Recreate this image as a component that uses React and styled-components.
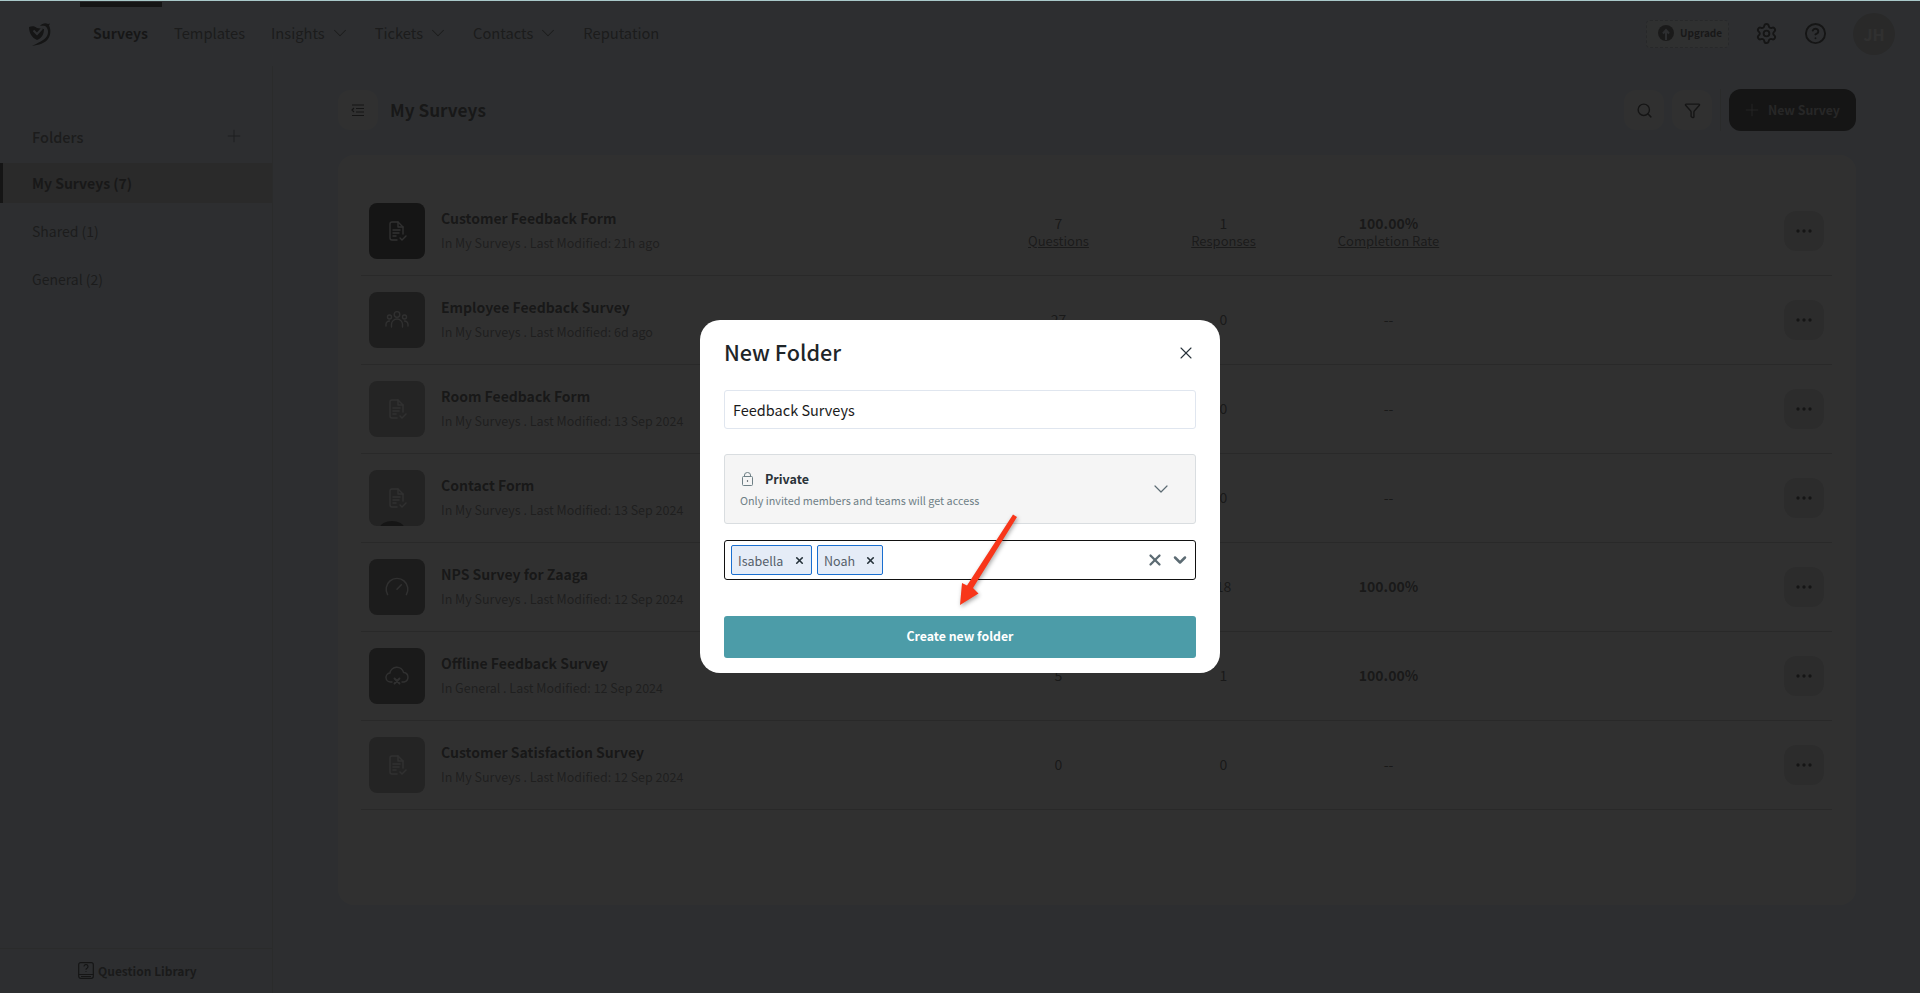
import React from "react";
import styled, { createGlobalStyle } from "styled-components";
import { ChevronDown, CircleHelp, Funnel, Gauge, Plus, Search, Settings, X } from "lucide-react";

const GlobalStyle = createGlobalStyle`
	* {
		box-sizing: border-box;
	}
	html, body {
		margin: 0;
		height: 100%;
		overflow: hidden;
	}
	body {
		font-family: "Noto Sans CJK SC", "Noto Sans", sans-serif;
		color: #232323;
	}
`;

const Page = styled.div`
	position: relative;
	width: 1920px;
	height: 993px;
	background: #dcecff;
	border-top: 1px solid #a9c9c9;
	display: flex;
	flex-direction: column;
	overflow: hidden;
`;

/* header */
const Header = styled.header`
	height: 65px;
	flex: none;
	display: flex;
	align-items: center;
	padding: 0 25px 0 29px;
`;

const Logo = styled.svg`
	width: 22px;
	height: 25px;
	margin-top: 1px;
	color: #000;
`;

const Nav = styled.nav`
	display: flex;
	align-items: center;
	margin-left: 42px;
	gap: 26px;
	flex: 1;
`;

const NavItem = styled.a`
	position: relative;
	display: flex;
	align-items: center;
	gap: 4px;
	padding-bottom: 2px;
	font-size: ${({ $active }) => ($active ? 14 : 14.7)}px;
	line-height: 62px;
	font-weight: ${({ $active }) => ($active ? 600 : 400)};
	color: ${({ $active }) => ($active ? "#111" : "#404040")};

	svg {
		margin-right: -2px;
	}

	${({ $active }) => $active && `
		&::before {
			content: "";
			position: absolute;
			top: 0;
			left: -13px;
			right: -14px;
			height: 5px;
			background: #000;
		}
	`}
`;

const UpgradeButton = styled.button`
	display: flex;
	align-items: center;
	gap: 6px;
	width: 83px;
	height: 28px;
	padding: 0 0 1px 11px;
	margin-right: 26px;
	background: #f4f8ff;
	border: 1px dashed #a8b2bc;
	border-radius: 4px;
	font: 700 10px/1 "Noto Sans CJK SC", "Noto Sans", sans-serif;
	color: #222;
`;

const HeaderIcon = styled.span`
	display: flex;
	color: #000;
	margin-right: ${({ $gap }) => $gap}px;
`;

const Avatar = styled.div`
	width: 42px;
	height: 42px;
	border-radius: 50%;
	background: #b8b8b8;
	color: #fff;
	display: flex;
	align-items: center;
	justify-content: center;
	font-size: 16px;
	font-weight: 600;
`;

/* sidebar */
const Body = styled.div`
	flex: 1;
	display: flex;
	min-height: 0;
`;

const Sidebar = styled.aside`
	width: 273px;
	flex: none;
	display: flex;
	flex-direction: column;
	border-right: 1px solid #c4cbd2;
	padding-top: 57px;
`;

const FolderHead = styled.div`
	display: flex;
	align-items: center;
	justify-content: space-between;
	padding: 0 28px 0 32px;
	height: 26px;
	font-size: 14.5px;
	color: #404040;
	font-weight: 500;
	margin-bottom: 14px;
`;

const FolderItem = styled.div`
	display: flex;
	align-items: center;
	height: 40px;
	margin-bottom: 8px;
	padding-left: ${({ $active }) => ($active ? 29 : 32)}px;
	font-size: 14px;
	font-weight: ${({ $active }) => ($active ? 600 : 400)};
	color: ${({ $active }) => ($active ? "#222" : "#484848")};
	background: ${({ $active }) => ($active ? "#c0c0c0" : "transparent")};
	border-left: ${({ $active }) => ($active ? "3px solid #000" : "0")};
`;

const SidebarFoot = styled.div`
	margin-top: auto;
	height: 45px;
	border-top: 1px solid #c4cbd2;
	display: flex;
	align-items: center;
	gap: 4px;
	padding: 0 0 2px 78px;
	font-size: 12px;
	font-weight: 700;
	color: #333;
`;

/* main */
const Main = styled.main`
	flex: 1;
	display: flex;
	flex-direction: column;
	padding: 23px 64px 0 65px;
	min-width: 0;
`;

const Toolbar = styled.div`
	display: flex;
	align-items: center;
	height: 42px;
	margin-bottom: 24px;
`;

const SquareButton = styled.button`
	width: 40px;
	height: 40px;
	flex: none;
	display: flex;
	align-items: center;
	justify-content: center;
	padding: 0;
	border: 0;
	border-radius: 12px;
	background: ${({ $tone }) => $tone || "#fafafa"};
	color: #000;
`;

const PageTitle = styled.h1`
	flex: 1;
	margin: 0 0 0 12px;
	font-size: 17.2px;
	line-height: 26px;
	font-weight: 600;
	color: #1c1c1c;
`;

const ToolGroup = styled.div`
	display: flex;
	gap: 8px;
`;

const ToolDivider = styled.span`
	width: 1px;
	height: 42px;
	margin: 0 8px;
	background: #c4cbd2;
`;

const NewSurveyButton = styled.button`
	width: 127px;
	height: 42px;
	display: flex;
	align-items: center;
	gap: 6px;
	padding: 0 0 0 13px;
	border: 0;
	border-radius: 12px;
	background: #000;
	color: #a6a6a6;
	font: 600 12.3px/1 "Noto Sans CJK SC", "Noto Sans", sans-serif;
`;

const Panel = styled.section`
	height: 750px;
	flex: none;
	background: #fff;
	border-radius: 16px;
	padding: 32px 24px 0 23px;
`;

const Row = styled.div`
	display: flex;
	align-items: center;
	height: 89px;
	padding: 0 8px;
	border-bottom: 1px solid #b8b8b8;
`;

const Tile = styled.div`
	position: relative;
	width: 56px;
	height: 56px;
	flex: none;
	border-radius: 8px;
	overflow: hidden;
	display: flex;
	align-items: center;
	justify-content: center;
	background: ${({ $tone }) => $tone};
	color: #fff;
`;

const TileBump = styled.span`
	position: absolute;
	left: 11px;
	bottom: -8px;
	width: 24px;
	height: 13px;
	border-radius: 50%;
	background: #000;
`;

const RowText = styled.div`
	width: 535px;
	margin: -2px 0 0 16px;
	flex: none;
`;

const RowTitle = styled.div`
	font-size: 14px;
	line-height: 20px;
	font-weight: 600;
	color: #1c1c1c;
`;

const RowMeta = styled.div`
	margin-top: 6px;
	font-size: 12.5px;
	line-height: 18px;
	color: #606060;
`;

const Stat = styled.div`
	width: 165px;
	flex: none;
	padding: ${({ $labelled }) => ($labelled ? "1px 0 0" : "0 0 2px")};
	text-align: center;
	font-size: 14px;
	line-height: 18px;
	font-weight: ${({ $bold }) => ($bold ? 700 : 400)};
	color: #2a2a2a;
`;

const StatLabel = styled.div`
	font-size: 13px;
	font-weight: 400;
	text-decoration: underline;
	color: #3a3a3a;
`;

const RowAction = styled.div`
	margin-left: auto;
`;

const MoreDots = styled.svg`
	width: 16px;
	height: 4px;
`;

/* modal */
const Overlay = styled.div`
	position: absolute;
	inset: 0;
	background: rgba(24, 24, 24, 0.895);
`;

const Modal = styled.div`
	position: absolute;
	left: 700px;
	top: 319px;
	width: 520px;
	height: 353px;
	background: #fff;
	border-radius: 20px;
	padding: 17px 24px 0;
`;

const ModalHead = styled.div`
	display: flex;
	align-items: center;
	justify-content: space-between;
	height: 32px;
	color: #27323a;
	margin-bottom: 21px;
`;

const ModalTitle = styled.h2`
	margin: 0;
	padding-bottom: 3px;
	font-size: 21.6px;
	line-height: 29px;
	font-weight: 500;
	color: #1e2528;
`;

const NameField = styled.div`
	height: 39px;
	border: 1px solid #e0e6ef;
	border-radius: 3px;
	display: flex;
	align-items: center;
	padding-left: 8px;
	font-size: 14.5px;
	color: #1b1b1b;
	margin-bottom: 25px;
`;

const PrivacyBox = styled.div`
	height: 70px;
	border: 1px solid #d9dde0;
	border-radius: 3px;
	background: #f5f5f5;
	display: flex;
	align-items: center;
	justify-content: space-between;
	padding: 0 22px 0 15px;
	margin-bottom: 16px;
`;

const PrivacyTitle = styled.div`
	display: flex;
	align-items: center;
	gap: 12px;
	padding-left: 2px;
	font-size: 12.5px;
	line-height: 20px;
	font-weight: 600;
	color: #2a3338;
`;

const PrivacyHint = styled.div`
	margin-top: 2px;
	font-size: 10.8px;
	line-height: 18px;
	color: #6f8086;
`;

const MultiSelect = styled.div`
	height: 40px;
	border: 1px solid #111;
	border-radius: 3px;
	display: flex;
	align-items: center;
	gap: 5px;
	padding: 0 5px 0 6px;
	margin-bottom: 36px;
`;

const Chip = styled.span`
	width: ${({ $width }) => $width}px;
	height: 30px;
	display: flex;
	align-items: center;
	justify-content: space-between;
	padding: 0 6px;
	background: #e5ecf7;
	border: 1px solid #1a6fd0;
	border-radius: 2px;
	font-size: 12.5px;
	color: #55606a;
`;

const ChipRemove = styled.span`
	display: flex;
	color: #26323a;
`;

const SelectControls = styled.div`
	margin-left: auto;
	display: flex;
	align-items: center;
	gap: 6px;
	color: #5c6b73;
`;

const SubmitButton = styled.button`
	display: block;
	width: 100%;
	height: 42px;
	padding: 0 0 2px;
	border: 0;
	border-radius: 3px;
	background: #4c9ca8;
	color: #fff;
	font: 600 12.3px/1 "Noto Sans CJK SC", "Noto Sans", sans-serif;
`;

const Annotation = styled.svg`
	position: absolute;
	left: 950px;
	top: 504px;
	width: 80px;
	height: 110px;
	filter: drop-shadow(1px 2px 2px rgba(0, 0, 0, 0.35));
`;

const navItems = [
	{ label: "Surveys", active: true },
	{ label: "Templates" },
	{ label: "Insights", menu: true },
	{ label: "Tickets", menu: true },
	{ label: "Contacts", menu: true },
	{ label: "Reputation" },
];

const folders = [
	{ label: "My Surveys (7)", active: true },
	{ label: "Shared (1)" },
	{ label: "General (2)" },
];

const FormIcon = () => (
	<svg width="24" height="24" viewBox="0 0 24 24" fill="none" stroke="currentColor" strokeWidth="1.4" strokeLinecap="round" strokeLinejoin="round">
		<path d="M12 21H7a2 2 0 0 1-2-2V5a2 2 0 0 1 2-2h6l5 5v7" />
		<path d="M13 3v5h5M8 11h7M8 14h6M8 17h3M15 19l2 2 4-4" />
	</svg>
);

const TeamIcon = () => (
	<svg width="26" height="26" viewBox="0 0 26 26" fill="none" stroke="currentColor" strokeWidth="1.3" strokeLinecap="round">
		<circle cx="13" cy="7.5" r="2.8" />
		<circle cx="5.5" cy="10" r="2" />
		<circle cx="20.5" cy="10" r="2" />
		<path d="M7.5 20v-2.5a5.5 5.5 0 0 1 11 0V20M2 19v-1.5A3.5 3.5 0 0 1 5.500 14M24 19v-1.500A3.500 3.500 0 0 0 20.500 14" />
	</svg>
);

const OfflineIcon = () => (
	<svg width="26" height="26" viewBox="0 0 26 26" fill="none" stroke="currentColor" strokeWidth="1.4" strokeLinecap="round" strokeLinejoin="round">
		<path d="M8 19H6.500a4.500 4.500 0 0 1-.6-8.960A7 7 0 0 1 19.600 9.500 4.800 4.800 0 0 1 20 19h-2" />
		<path d="M10.500 15.500l5 5M15.500 15.500l-5 5" strokeWidth="1.800" />
	</svg>
);

const surveys = [
	{ title: "Customer Feedback Form", meta: "In My Surveys . Last Modified: 21h ago", tone: "#000000", icon: <FormIcon />, questions: "7", responses: "1", rate: "100.00%", labels: true },
	{ title: "Employee Feedback Survey", meta: "In My Surveys . Last Modified: 6d ago", tone: "#5a5a5a", icon: <TeamIcon />, questions: "27", responses: "0", rate: "--" },
	{ title: "Room Feedback Form", meta: "In My Surveys . Last Modified: 13 Sep 2024", tone: "#909090", icon: <FormIcon />, questions: "4", responses: "0", rate: "--" },
	{ title: "Contact Form", meta: "In My Surveys . Last Modified: 13 Sep 2024", tone: "#808080", icon: <FormIcon />, questions: "3", responses: "0", rate: "--", bump: true },
	{ title: "NPS Survey for Zaaga", meta: "In My Surveys . Last Modified: 12 Sep 2024", tone: "#484848", icon: <Gauge size={26} strokeWidth={1.3} />, questions: "2", responses: "18", rate: "100.00%" },
	{ title: "Offline Feedback Survey", meta: "In General . Last Modified: 12 Sep 2024", tone: "#303030", icon: <OfflineIcon />, questions: "5", responses: "1", rate: "100.00%" },
	{ title: "Customer Satisfaction Survey", meta: "In My Surveys . Last Modified: 12 Sep 2024", tone: "#909090", icon: <FormIcon />, questions: "0", responses: "0", rate: "--" },
];

function SurveyRow({ survey }) {
	return (
		<Row>
			<Tile $tone={survey.tone}>
				{survey.icon}
				{survey.bump && <TileBump />}
			</Tile>
			<RowText>
				<RowTitle>{survey.title}</RowTitle>
				<RowMeta>{survey.meta}</RowMeta>
			</RowText>
			<Stat $labelled={survey.labels}>
				{survey.questions}
				{survey.labels && <StatLabel>Questions</StatLabel>}
			</Stat>
			<Stat $labelled={survey.labels}>
				{survey.responses}
				{survey.labels && <StatLabel>Responses</StatLabel>}
			</Stat>
			<Stat $labelled={survey.labels} $bold={survey.rate !== "--"}>
				{survey.rate}
				{survey.labels && <StatLabel>Completion Rate</StatLabel>}
			</Stat>
			<RowAction>
				<SquareButton $tone="#d8d8d8">
					<MoreDots viewBox="0 0 16 4" fill="currentColor">
						<circle cx="2" cy="2" r="1.700" />
						<circle cx="8" cy="2" r="1.700" />
						<circle cx="14" cy="2" r="1.700" />
					</MoreDots>
				</SquareButton>
			</RowAction>
		</Row>
	);
}

export default function App() {
	return (
		<Page>
			<GlobalStyle />
			<Header>
				<Logo viewBox="0 0 22 25" fill="currentColor">
					<path d="M0 5C3 3.500 6 4 8 6l7 1c0 5-2 9-7 11C3 16 0 11 0 5z" />
					<path d="M11 4c2-3 6-3.500 8-2l2-.5-1 2C22 7 22 13 19 17c-3 4-9 6-16 7 5-3 12-5 15-10 2-4 1-8-2-10-1.500-.5-3-.5-5 0z" />
					<path d="M4.500 8.500l3.500 3.500 5-5.500" fill="none" stroke="#dcecff" strokeWidth="2" />
				</Logo>
				<Nav>
					{navItems.map((item) => (
						<NavItem key={item.label} $active={item.active}>
							{item.label}
							{item.menu && <ChevronDown size={22} strokeWidth={1.1} />}
						</NavItem>
					))}
				</Nav>
				<UpgradeButton>
					<svg width="16" height="16" viewBox="0 0 16 16">
						<circle cx="8" cy="8" r="8" fill="#333" />
						<path d="M8 15V6M5 8.500L8 5l3 3.500" fill="none" stroke="#dcecff" strokeWidth="2" />
					</svg>
					Upgrade
				</UpgradeButton>
				<HeaderIcon $gap={26}><Settings size={23} strokeWidth={2} /></HeaderIcon>
				<HeaderIcon $gap={26}><CircleHelp size={23} strokeWidth={2} /></HeaderIcon>
				<Avatar>JH</Avatar>
			</Header>
			<Body>
				<Sidebar>
					<FolderHead>
						Folders
						<Plus size={20} strokeWidth={1} />
					</FolderHead>
					{folders.map((folder) => (
						<FolderItem key={folder.label} $active={folder.active}>{folder.label}</FolderItem>
					))}
					<SidebarFoot>
						<svg width="16" height="17" viewBox="0 0 16 17" fill="none" stroke="#000" strokeWidth="1.200">
							<rect x="0.700" y="0.700" width="14.600" height="15.600" rx="2" />
							<path d="M.7 12.500h14.600M3 14.500h10" />
							<path d="M6 4.500a2 2 0 1 1 3 1.800c-.8.400-1 .8-1 1.500M8 9v.8" />
						</svg>
						Question Library
					</SidebarFoot>
				</Sidebar>
				<Main>
					<Toolbar>
						<SquareButton>
							<svg width="14" height="14" viewBox="0 0 14 14" fill="none" stroke="#000" strokeWidth="1.200">
								<path d="M1 2h12M5 5.500h8M5 9h8M1 12.500h12M3 5l-2 2 2 2" />
							</svg>
						</SquareButton>
						<PageTitle>My Surveys</PageTitle>
						<ToolGroup>
							<SquareButton><Search size={17} strokeWidth={2} /></SquareButton>
							<SquareButton><Funnel size={17} strokeWidth={2} /></SquareButton>
						</ToolGroup>
						<ToolDivider />
						<NewSurveyButton>
							<Plus size={20} strokeWidth={1} />
							New Survey
						</NewSurveyButton>
					</Toolbar>
					<Panel>
						{surveys.map((survey) => <SurveyRow key={survey.title} survey={survey} />)}
					</Panel>
				</Main>
			</Body>
			<Overlay />
			<Modal>
				<ModalHead>
					<ModalTitle>New Folder</ModalTitle>
					<X size={20} strokeWidth={1.300} />
				</ModalHead>
				<NameField>Feedback Surveys</NameField>
				<PrivacyBox>
					<div>
						<PrivacyTitle>
							<svg width="11" height="14" viewBox="0 0 11 14" fill="none" stroke="#6f8086">
								<rect x="0.500" y="4.500" width="10" height="9" rx="1" />
								<path d="M2.500 4.500V3a3 2.500 0 0 1 6 0v1.500" />
								<circle cx="5.500" cy="9" r="0.700" fill="#2a3338" stroke="none" />
							</svg>
							Private
						</PrivacyTitle>
						<PrivacyHint>Only invited members and teams will get access</PrivacyHint>
					</div>
					<ChevronDown size={24} strokeWidth={1.200} color="#5c6b73" />
				</PrivacyBox>
				<MultiSelect>
					<Chip $width={81}>Isabella<ChipRemove><X size={11} strokeWidth={3.500} /></ChipRemove></Chip>
					<Chip $width={66}>Noah<ChipRemove><X size={11} strokeWidth={3.500} /></ChipRemove></Chip>
					<SelectControls>
						<X size={18} strokeWidth={3} />
						<ChevronDown size={20} strokeWidth={3} />
					</SelectControls>
				</MultiSelect>
				<SubmitButton>Create new folder</SubmitButton>
			</Modal>
			<Annotation viewBox="0 0 80 110">
				<path d="M63 9.500L67 12L23 83L28.500 88.500L10 100L12 78L17 80.500Z" fill="#f8361a" />
			</Annotation>
		</Page>
	);
}
